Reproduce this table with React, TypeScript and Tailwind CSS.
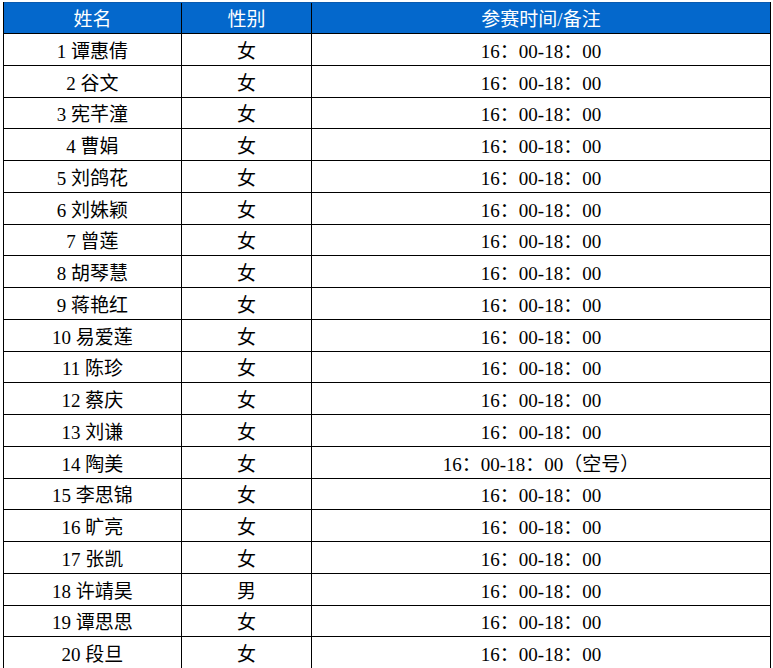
const rows: [string, string, string][] = [
  ['1 谭惠倩', '女', '16：00-18：00'],
  ['2 谷文', '女', '16：00-18：00'],
  ['3 宪芊潼', '女', '16：00-18：00'],
  ['4 曹娟', '女', '16：00-18：00'],
  ['5 刘鸽花', '女', '16：00-18：00'],
  ['6 刘姝颖', '女', '16：00-18：00'],
  ['7 曾莲', '女', '16：00-18：00'],
  ['8 胡琴慧', '女', '16：00-18：00'],
  ['9 蒋艳红', '女', '16：00-18：00'],
  ['10 易爱莲', '女', '16：00-18：00'],
  ['11 陈珍', '女', '16：00-18：00'],
  ['12 蔡庆', '女', '16：00-18：00'],
  ['13 刘谦', '女', '16：00-18：00'],
  ['14 陶美', '女', '16：00-18：00（空号）'],
  ['15 李思锦', '女', '16：00-18：00'],
  ['16 旷亮', '女', '16：00-18：00'],
  ['17 张凯', '女', '16：00-18：00'],
  ['18 许靖昊', '男', '16：00-18：00'],
  ['19 谭思思', '女', '16：00-18：00'],
  ['20 段旦', '女', '16：00-18：00'],
]

export default function App() {
  return (
    <div
      className="h-[668px] w-[773px] overflow-hidden bg-white pt-[2px] pl-[3px]"
      style={{ fontFamily: '"Liberation Serif", "Noto Sans CJK SC", serif' }}
    >
      <div className="w-[768px] border-l border-r border-black text-[19px] leading-none text-black">
        {/* header */}
        <div className="grid h-[32px] grid-cols-[178px_130px_1fr] border-t border-b border-t-[#0a5bb0] border-b-black bg-[#0468cc] text-white">
          <div className="flex items-center justify-center border-r border-black pt-[2px]">姓名</div>
          <div className="flex items-center justify-center border-r border-black pt-[2px]">性别</div>
          <div className="flex items-center justify-center pt-[2px]">参赛时间/备注</div>
        </div>
        {rows.map(([name, sex, time]) => (
          <div key={name} className="grid h-[31.75px] grid-cols-[178px_130px_1fr] border-b border-black">
            <div className="flex items-center justify-center border-r border-black pt-[4px]">{name}</div>
            <div className="flex items-center justify-center border-r border-black pt-[4px]">{sex}</div>
            <div className="flex items-center justify-center pt-[4px]">{time}</div>
          </div>
        ))}
      </div>
    </div>
  )
}
